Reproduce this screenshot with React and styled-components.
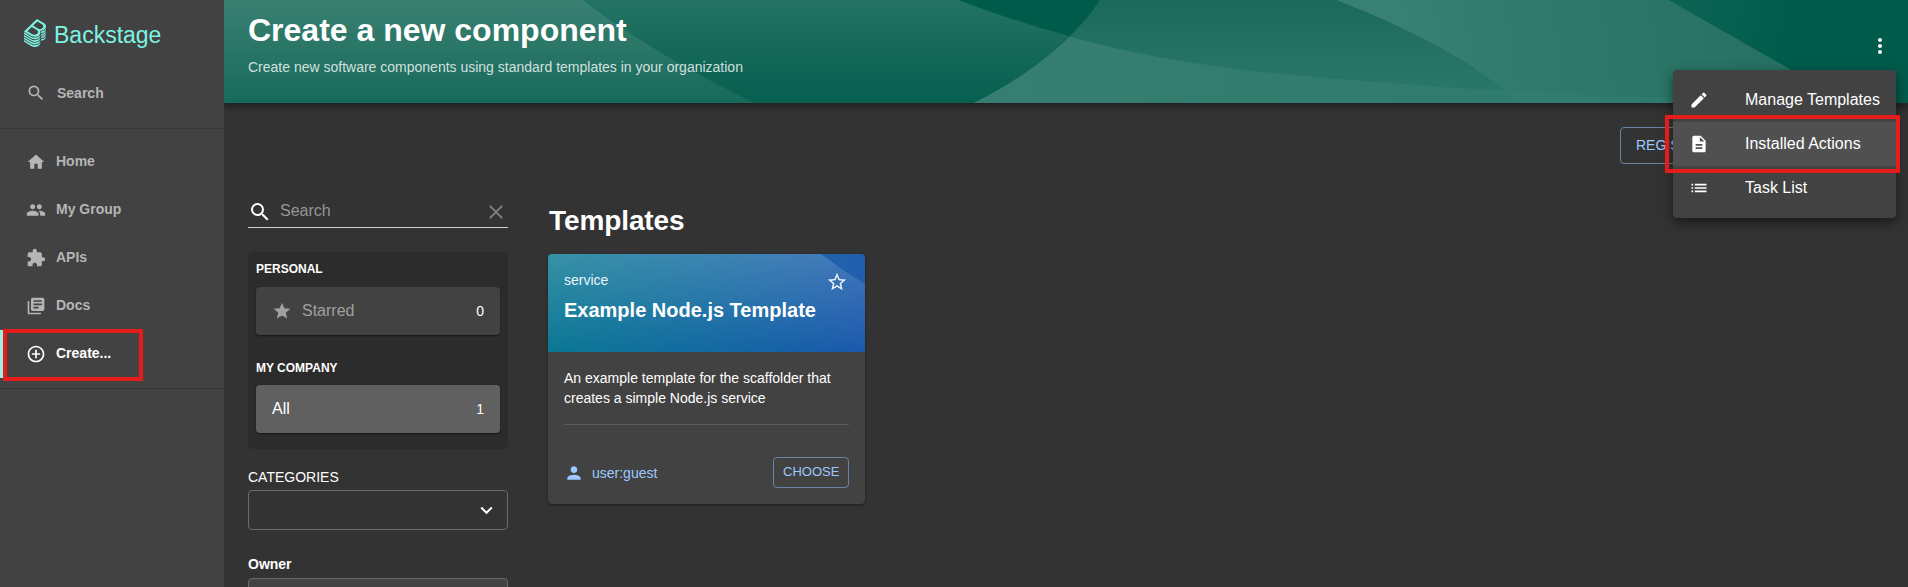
import React from "react";
import styled, { createGlobalStyle } from "styled-components";
import { SiBackstage } from "react-icons/si";
import {
  MdSearch, MdHome, MdPeople, MdExtension, MdLibraryBooks, MdAddCircleOutline,
  MdStar, MdStarBorder, MdPerson, MdEdit, MdDescription, MdList, MdMoreVert, MdClear,
} from "react-icons/md";

const GlobalStyle = createGlobalStyle`
  *, *::before, *::after { box-sizing: border-box; }
  body {
    margin: 0;
    background: #333333;
    color: #fff;
    font-family: "Liberation Sans", Arial, Helvetica, sans-serif;
    font-size: 14px;
    overflow: hidden;
  }
  svg { display: block; flex: none; }
`;

const Page = styled.div`
  position: relative;
  display: flex;
  height: 587px;
  overflow: hidden;
`;

const Sidebar = styled.nav`
  position: relative;
  z-index: 1;
  width: 224px;
  flex: none;
  background: #424242;
`;

const Logo = styled.div`
  display: flex;
  align-items: center;
  height: 69px;
  padding: 0 0 3px 21px;
  gap: 5px;
  color: #7df3e1;
  font-size: 23px;
  line-height: 28px;
`;

const LogoText = styled.span`
  padding-top: 3px;
`;

const NavItem = styled.a`
  display: flex;
  align-items: center;
  height: 48px;
  padding-left: ${(p) => (p.$active ? 23 : 26)}px;
  gap: ${(p) => p.$gap || 10}px;
  font-weight: 700;
  line-height: 16px;
  color: ${(p) => (p.$active ? "#fff" : "#b5b5b5")};
  border-left: ${(p) => (p.$active ? "3px solid #9bf0e1" : "none")};
  span { padding-bottom: ${(p) => (p.$gap ? 1 : 3)}px; }
`;

const Rule = styled.hr`
  height: 1px;
  margin: ${(p) => p.$margin || "0"};
  border: 0;
  background: ${(p) => p.$color || "#383838"};
`;

const Main = styled.main`
  flex: 1;
  min-width: 0;
`;

const Header = styled.header`
  position: relative;
  display: flex;
  justify-content: space-between;
  height: 103px;
  padding: 11px 16px 0 24px;
  background: #005b4b;
  box-shadow: 0 2px 8px 1px rgba(0, 0, 0, 0.45);
`;

const HeaderArt = styled.svg`
  position: absolute;
  inset: 0;
  width: 100%;
  height: 100%;
`;

const HeaderText = styled.div`
  position: relative;
`;

const PageTitle = styled.h1`
  margin: 0;
  font-size: 32px;
  line-height: 38px;
`;

const Subtitle = styled.p`
  margin: 10px 0 0;
  line-height: 16px;
  color: rgba(255, 255, 255, 0.8);
`;

const MoreButton = styled.div`
  position: relative;
  margin-top: 23px;
`;

const Toolbar = styled.div`
  display: flex;
  justify-content: flex-end;
  padding: 24px 24px 0 0;
`;

const OutlineButton = styled.div`
  display: flex;
  align-items: center;
  width: ${(p) => p.$width}px;
  height: ${(p) => p.$height}px;
  padding: 0 0 ${(p) => p.$lift || 0}px ${(p) => p.$inset}px;
  border: 1px solid #6a83a0;
  border-radius: 4px;
  color: #9cc9ff;
  font-size: ${(p) => p.$size}px;
  line-height: 16px;
  white-space: nowrap;
`;

const Content = styled.div`
  display: flex;
  gap: 40px;
  padding: 32px 24px 0;
`;

const Filters = styled.aside`
  width: 260px;
  flex: none;
`;

const SearchField = styled.div`
  display: flex;
  align-items: center;
  height: 32px;
  border-bottom: 1px solid #cfcfcf;
  font-size: 16px;
`;

const Placeholder = styled.span`
  flex: 1;
  padding: 0 0 2px 8px;
  color: #959595;
`;

const ClearIcon = styled(MdClear)`
  color: #7a7a7a;
`;

const FilterPanel = styled.section`
  height: 197px;
  margin-top: 24px;
  padding: 9px 8px 0;
  border-radius: 5px;
  background: #2c2c2c;
`;

const FilterHeading = styled.h6`
  margin: ${(p) => p.$margin};
  font-size: 12px;
  line-height: 16px;
`;

const FilterItem = styled.div`
  display: flex;
  align-items: center;
  height: 48px;
  padding: 0 16px;
  gap: 10px;
  border-radius: 4px;
  background: ${(p) => (p.$selected ? "#606060" : "#424242")};
  box-shadow: 0 1px 2px rgba(0, 0, 0, 0.5);
  color: ${(p) => (p.$selected ? "#fff" : "#a0a0a0")};
  font-size: 16px;
  line-height: 20px;
`;

const FilterName = styled.span`
  flex: 1;
`;

const FilterCount = styled.span`
  color: #fff;
  font-size: 14px;
`;

const FieldLabel = styled.div`
  margin: ${(p) => p.$margin};
  font-weight: ${(p) => (p.$bold ? 700 : 400)};
  line-height: 16px;
`;

const SelectBox = styled.div`
  display: flex;
  align-items: center;
  justify-content: flex-end;
  height: 40px;
  padding-right: 14px;
  border: 1px solid #6b6b6b;
  border-radius: 4px;
  background: ${(p) => (p.$filled ? "#424242" : "transparent")};
`;

const Results = styled.section`
  flex: 1;
`;

const SectionTitle = styled.h2`
  margin: 9px 0 17px;
  padding-left: 1px;
  font-size: 28px;
  line-height: 32px;
  letter-spacing: -0.1px;
`;

const Card = styled.article`
  width: 317px;
  height: 250px;
  overflow: hidden;
  border-radius: 4px;
  background: #424242;
  box-shadow: 0 1px 3px rgba(0, 0, 0, 0.45);
`;

const CardHeader = styled.div`
  position: relative;
  height: 98px;
  padding: 18px 16px 0;
  background: linear-gradient(97deg, #087792 0%, #0f68a0 50%, #1957ac 100%);
`;

const CardArt = styled(HeaderArt)``;

const CardTop = styled.div`
  position: relative;
  display: flex;
  align-items: flex-start;
  justify-content: space-between;
  height: 26px;
  padding-right: 1px;
  line-height: 16px;
  color: #eef5fa;
  svg { margin-top: -1px; }
`;

const CardTitle = styled.h3`
  position: relative;
  margin: 0;
  font-size: 20px;
  line-height: 24px;
`;

const CardBody = styled.div`
  padding: 16px 16px 0;
`;

const Description = styled.p`
  margin: 0 0 16px;
  line-height: 20px;
`;

const CardFooter = styled.div`
  display: flex;
  align-items: center;
  justify-content: space-between;
  margin-top: 32px;
`;

const Owner = styled.div`
  display: flex;
  align-items: center;
  gap: 8px;
  color: #9cc9ff;
`;

const Menu = styled.div`
  position: absolute;
  top: 70px;
  right: 12px;
  width: 223px;
  padding: 8px 0;
  border-radius: 4px;
  background: #424242;
  box-shadow: 0 5px 8px -1px rgba(0, 0, 0, 0.3), 0 4px 14px 1px rgba(0, 0, 0, 0.25);
`;

const MenuItem = styled.div`
  display: flex;
  align-items: center;
  height: 44px;
  padding-left: 16px;
  gap: 36px;
  background: ${(p) => (p.$hover ? "#505050" : "transparent")};
  font-size: 16px;
  line-height: 20px;
  white-space: nowrap;
  span { padding-bottom: 1px; }
`;

const Highlight = styled.div`
  position: absolute;
  z-index: 2;
  left: ${(p) => p.$x}px;
  top: ${(p) => p.$y}px;
  width: ${(p) => p.$w}px;
  height: ${(p) => p.$h}px;
  border: 4px solid #e61b1b;
`;

function HeaderWaves() {
  return (
    <HeaderArt viewBox="224 0 1684 103" preserveAspectRatio="none">
      <defs>
        <linearGradient id="left" x1="0" y1="0" x2="0" y2="1">
          <stop offset="0" stopColor="#3a8072" /><stop offset="1" stopColor="#176a5a" />
        </linearGradient>
        <linearGradient id="middle" x1="0" y1="0" x2="0" y2="1">
          <stop offset="0" stopColor="#247364" /><stop offset="1" stopColor="#065f4f" />
        </linearGradient>
        <linearGradient id="dome" x1="0" y1="0" x2="0" y2="1">
          <stop offset="0" stopColor="#1a6a5b" /><stop offset="1" stopColor="#2c796b" />
        </linearGradient>
        <linearGradient id="low" x1="0" y1="0" x2="1" y2="0">
          <stop offset="0" stopColor="#367e71" /><stop offset="1" stopColor="#2f7b6d" />
        </linearGradient>
        <linearGradient id="right" gradientUnits="userSpaceOnUse" x1="1400" y1="50" x2="1760" y2="0">
          <stop offset="0" stopColor="#388073" /><stop offset="0.3" stopColor="#2f7b6d" /><stop offset="1" stopColor="#267163" />
        </linearGradient>
        <linearGradient id="edge" gradientUnits="userSpaceOnUse" x1="1680" y1="0" x2="1800" y2="35">
          <stop offset="0" stopColor="#0c6353" /><stop offset="1" stopColor="#005b4b" />
        </linearGradient>
      </defs>
      <path fill="url(#middle)" d="M224 0H958C995 14 1032 26 1069 36Q1035 72 974 103H224Z" />
      <path fill="url(#left)" d="M224 0H582Q660 58 755 103H224Z" />
      <path fill="url(#dome)" d="M1100 0H1336C1410 29 1475 62 1518 103H974C1030 75 1075 38 1100 0Z" />
      <path fill="url(#low)" d="M1069.5 36.5C1150 60 1250 72 1330 78.500C1390 83 1450 88 1506 91L1518 103H974Q1035 72 1069.500 36.500Z" />
      <path fill="url(#right)" d="M1336 0H1669L1850 103H1518C1475 62 1410 29 1336 0Z" />
      <path fill="#358174" opacity=".45" d="M1506 91Q1590 96 1690 98V103H1518Z" />
      <path fill="url(#edge)" d="M1669 0H1908V103H1850Z" />
    </HeaderArt>
  );
}

const navItems = [
  { label: "Home", Icon: MdHome },
  { label: "My Group", Icon: MdPeople },
  { label: "APIs", Icon: MdExtension },
  { label: "Docs", Icon: MdLibraryBooks },
  { label: "Create...", Icon: MdAddCircleOutline, active: true },
];

const menuItems = [
  { label: "Manage Templates", Icon: MdEdit },
  { label: "Installed Actions", Icon: MdDescription, hover: true },
  { label: "Task List", Icon: MdList },
];

export default function App() {
  return (
    <>
      <GlobalStyle />
      <Page>
        <Sidebar>
          <Logo>
            <SiBackstage size={28} />
            <LogoText>Backstage</LogoText>
          </Logo>
          <NavItem $gap={11}>
            <MdSearch size={20} />
            <span>Search</span>
          </NavItem>
          <Rule $margin="11px 0 9px" />
          {navItems.map(({ label, Icon, active }) => (
            <NavItem key={label} $active={active}>
              <Icon size={20} />
              <span>{label}</span>
            </NavItem>
          ))}
          <Rule $margin="10px 0 0" />
        </Sidebar>
        <Main>
          <Header>
            <HeaderWaves />
            <HeaderText>
              <PageTitle>Create a new component</PageTitle>
              <Subtitle>Create new software components using standard templates in your organization</Subtitle>
            </HeaderText>
            <MoreButton><MdMoreVert size={24} /></MoreButton>
          </Header>
          <Toolbar>
            <OutlineButton $width={264} $height={37} $size={14} $inset={15} $lift={2}>REGIS</OutlineButton>
          </Toolbar>
          <Content>
            <Filters>
              <SearchField>
                <MdSearch size={24} />
                <Placeholder>Search</Placeholder>
                <ClearIcon size={24} />
              </SearchField>
              <FilterPanel>
                <FilterHeading $margin="0 0 10px">PERSONAL</FilterHeading>
                <FilterItem>
                  <MdStar size={20} />
                  <FilterName>Starred</FilterName>
                  <FilterCount>0</FilterCount>
                </FilterItem>
                <FilterHeading $margin="25px 0 9px">MY COMPANY</FilterHeading>
                <FilterItem $selected>
                  <FilterName>All</FilterName>
                  <FilterCount>1</FilterCount>
                </FilterItem>
              </FilterPanel>
              <FieldLabel $margin="20px 0 5px">CATEGORIES</FieldLabel>
              <SelectBox>
                <svg width="13" height="9" viewBox="0 0 13 9" fill="none" stroke="#fff" strokeWidth="2">
                  <path d="M1.200 1.500 6.500 6.800 11.800 1.500" />
                </svg>
              </SelectBox>
              <FieldLabel $bold $margin="26px 0 6px">Owner</FieldLabel>
              <SelectBox $filled />
            </Filters>
            <Results>
              <SectionTitle>Templates</SectionTitle>
              <Card>
                <CardHeader>
                  <CardArt viewBox="0 0 317 98" preserveAspectRatio="none">
                    <defs>
                      <linearGradient id="sheen" x1="0" y1="0" x2="0" y2="1">
                        <stop offset="0" stopColor="#fff" stopOpacity=".19" />
                        <stop offset="1" stopColor="#fff" stopOpacity=".01" />
                      </linearGradient>
                    </defs>
                    <path fill="url(#sheen)" d="M0 0H273Q294 16 317 30V98H0Z" />
                    <path fill="#fff" opacity=".04" d="M273 0H317V30Q294 16 273 0Z" />
                  </CardArt>
                  <CardTop>
                    <span>service</span>
                    <MdStarBorder size={22} />
                  </CardTop>
                  <CardTitle>Example Node.js Template</CardTitle>
                </CardHeader>
                <CardBody>
                  <Description>An example template for the scaffolder that creates a simple Node.js service</Description>
                  <Rule $color="#5c5c5c" />
                  <CardFooter>
                    <Owner>
                      <MdPerson size={20} />
                      <span>user:guest</span>
                    </Owner>
                    <OutlineButton $width={76} $height={31} $size={13} $inset={9} $lift={2}>CHOOSE</OutlineButton>
                  </CardFooter>
                </CardBody>
              </Card>
            </Results>
          </Content>
        </Main>
        <Menu>
          {menuItems.map(({ label, Icon, hover }) => (
            <MenuItem key={label} $hover={hover}>
              <Icon size={20} />
              <span>{label}</span>
            </MenuItem>
          ))}
        </Menu>
        <Highlight $x={3} $y={329} $w={140} $h={52} />
        <Highlight $x={1665} $y={115} $w={235} $h={58} />
      </Page>
    </>
  );
}
